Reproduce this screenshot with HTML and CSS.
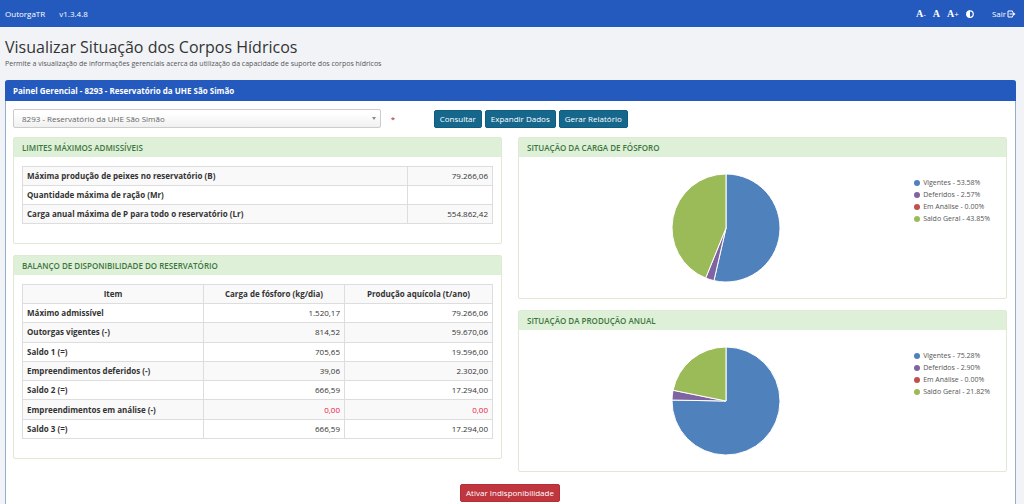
FILE: index.html
```
<!DOCTYPE html>
<html lang="pt-BR">
<head>
<meta charset="utf-8">
<meta name="viewport" content="width=device-width, initial-scale=1">
<title>OutorgaTR</title>
<link rel="stylesheet" href="styles.css">
</head>
<body>
<header class="topbar">
  <a class="brand" href="#">OutorgaTR</a>
  <span class="version">v1.3.4.8</span>
  <nav class="tools">
    <button class="tool" type="button"><span class="letter">A</span>-</button>
    <button class="tool" type="button"><span class="letter">A</span></button>
    <button class="tool" type="button"><span class="letter">A</span>+</button>
    <button class="tool" type="button" aria-label="Contraste">
      <svg class="icon-contrast" viewBox="0 0 16 16"><circle cx="8" cy="8" r="6.5" fill="none" stroke="currentColor" stroke-width="2.500"/><path d="M8 1a7 7 0 0 0 0 14z" fill="currentColor"/></svg>
    </button>
    <a class="logout" href="#">Sair
      <svg class="icon-logout" viewBox="0 0 18 16" fill="none" stroke="currentColor" stroke-width="2"><path d="M11 5V2H2v12h9V11"/><path d="M5 8h9"/><path d="M12 4l5 4-5 4z" fill="currentColor" stroke="none"/></svg>
    </a>
  </nav>
</header>
<main class="page">
  <h1 class="title">Visualizar Situação dos Corpos Hídricos</h1>
  <p class="subtitle">Permite a visualização de informações gerenciais acerca da utilização da capacidade de suporte dos corpos hídricos</p>
  <section class="panel">
    <h2 class="panel-head">Painel Gerencial - 8293 - Reservatório da UHE São Simão</h2>
    <div class="panel-body">
      <form class="filters">
        <div class="picker">
          <select class="select" aria-label="Reservatório"><option>8293 - Reservatório da UHE São Simão</option></select>
        </div>
        <span class="required">*</span>
        <div class="actions">
          <button class="btn" type="button">Consultar</button>
          <button class="btn" type="button">Expandir Dados</button>
          <button class="btn" type="button">Gerar Relatório</button>
        </div>
      </form>
      <div class="columns">
        <div class="column">
          <section class="card">
            <h3 class="card-head">LIMITES MÁXIMOS ADMISSÍVEIS</h3>
            <div class="card-body">
              <table class="table limits">
                <tr><th scope="row">Máxima produção de peixes no reservatório (B)</th><td>79.266,06</td></tr>
                <tr><th scope="row">Quantidade máxima de ração (Mr)</th><td></td></tr>
                <tr><th scope="row">Carga anual máxima de P para todo o reservatório (Lr)</th><td>554.862,42</td></tr>
              </table>
            </div>
          </section>
          <section class="card">
            <h3 class="card-head">BALANÇO DE DISPONIBILIDADE DO RESERVATÓRIO</h3>
            <div class="card-body">
              <table class="table balance">
                <thead><tr><th>Item</th><th>Carga de fósforo (kg/dia)</th><th>Produção aquícola (t/ano)</th></tr></thead>
                <tbody>
                <tr><th scope="row">Máximo admissível</th><td>1.520,17</td><td>79.266,06</td></tr>
                <tr><th scope="row">Outorgas vigentes (-)</th><td>814,52</td><td>59.670,06</td></tr>
                <tr><th scope="row">Saldo 1 (=)</th><td>705,65</td><td>19.596,00</td></tr>
                <tr><th scope="row">Empreendimentos deferidos (-)</th><td>39,06</td><td>2.302,00</td></tr>
                <tr><th scope="row">Saldo 2 (=)</th><td>666,59</td><td>17.294,00</td></tr>
                <tr class="alert"><th scope="row">Empreendimentos em análise (-)</th><td>0,00</td><td>0,00</td></tr>
                <tr><th scope="row">Saldo 3 (=)</th><td>666,59</td><td>17.294,00</td></tr>
                </tbody>
              </table>
            </div>
          </section>
        </div>
        <div class="column">
          <section class="card">
            <h3 class="card-head">SITUAÇÃO DA CARGA DE FÓSFORO</h3>
            <div class="chart">
              <svg class="pie" viewBox="0 0 110 110">
                <path class="blue" d="M55 55V1A54 54 0 1 1 42.950 107.640z"/>
                <path class="purple" d="M55 55L42.950 107.640A54 54 0 0 1 34.650 105.020z"/>
                <path class="green" d="M55 55L34.650 105.020A54 54 0 0 1 55 1z"/>
              </svg>
              <ul class="legend">
                <li><i class="dot dot-blue"></i>Vigentes - 53.58%</li>
                <li><i class="dot dot-purple"></i>Deferidos - 2.57%</li>
                <li><i class="dot dot-red"></i>Em Análise - 0.00%</li>
                <li><i class="dot dot-green"></i>Saldo Geral - 43.85%</li>
              </ul>
            </div>
          </section>
          <section class="card">
            <h3 class="card-head">SITUAÇÃO DA PRODUÇÃO ANUAL</h3>
            <div class="chart">
              <svg class="pie" viewBox="0 0 110 110">
                <path class="blue" d="M55 55V1A54 54 0 1 1 1.010 54.050z"/>
                <path class="purple" d="M55 55L1.010 54.050A54 54 0 0 1 2.070 44.280z"/>
                <path class="green" d="M55 55L2.070 44.280A54 54 0 0 1 55 1z"/>
              </svg>
              <ul class="legend">
                <li><i class="dot dot-blue"></i>Vigentes - 75.28%</li>
                <li><i class="dot dot-purple"></i>Deferidos - 2.90%</li>
                <li><i class="dot dot-red"></i>Em Análise - 0.00%</li>
                <li><i class="dot dot-green"></i>Saldo Geral - 21.82%</li>
              </ul>
            </div>
          </section>
        </div>
      </div>
      <div class="footer-actions"><button class="btn btn-danger" type="button">Ativar Indisponibilidade</button></div>
    </div>
  </section>
</main>
</body>
</html>
```
FILE: styles.css
```
* { box-sizing: border-box; }
body {
  margin: 0;
  min-height: 100vh;
  display: flex;
  flex-direction: column;
  background: #f1f3f7;
  color: #333;
  font: 8px/12px "Open Sans", "Noto Sans", sans-serif;
}
button, select { font: inherit; }
h1, h2, h3, p, ul { margin: 0; padding: 0; }

.topbar {
  display: flex;
  align-items: center;
  height: 27px;
  padding: 0 8px 0 5px;
  background: #2459bd;
  color: #fff;
}
.topbar a { color: #fff; text-decoration: none; }
.version { margin-left: 14px; }
.tools { display: flex; align-items: center; gap: 7px; margin-left: auto; }
.tool {
  display: flex;
  align-items: center;
  padding: 0;
  border: 0;
  background: none;
  color: #fff;
}
.letter { font: bold 10px/12px "Liberation Serif", serif; }
.icon-contrast { width: 8px; height: 8px; }
.logout { display: flex; align-items: center; gap: 1px; margin-left: 11px; }
.icon-logout { width: 9px; height: 8px; }

.page {
  flex: 1;
  display: flex;
  flex-direction: column;
  padding: 10px 8px 0 5px;
}
.title { font-size: 16px; line-height: 21px; font-weight: 400; }
.subtitle { font-size: 7px; color: #555; }
.panel {
  flex: 1;
  margin-top: 10px;
  border: 1px solid #8fb0cc;
  border-width: 0 1px;
  border-radius: 3px 3px 0 0;
  background: #fff;
}
.panel-head {
  margin: 0 -1px;
  padding: 0 8px;
  border-radius: 3px 3px 0 0;
  background: #2459bd;
  color: #fff;
  font-size: 8px;
  line-height: 21px;
}
.panel-body { padding: 8px 8px 0 7px; }

.filters { display: flex; align-items: center; }
.picker { position: relative; width: 37%; height: 19px; }
.picker::after {
  content: "";
  position: absolute;
  top: 8px;
  right: 5px;
  border: 2px solid transparent;
  border-top: 3px solid #888;
  border-bottom: 0;
}
.select {
  width: 100%;
  height: 100%;
  padding: 0 8px;
  appearance: none;
  border: 1px solid #ccc;
  border-radius: 2px;
  background: linear-gradient(#fff 20%, #f0f0f0 100%);
  color: #666;
}
.required { width: 53px; padding-left: 10px; color: #a02030; }
.actions { display: flex; gap: 3px; }
.btn {
  height: 18px;
  padding: 0 5px;
  border: 1px solid #125c80;
  border-radius: 2px;
  background: #16678c;
  color: #fff;
}
.btn-danger { border-color: #b52e37; background: #c0363f; }

.columns { display: grid; grid-template-columns: 1fr 1fr; gap: 16px; margin-top: 9px; }
.column { display: flex; flex-direction: column; gap: 11px; }
.card { border: 1px solid #dfead5; border-radius: 2px; background: #fff; }
.card-head {
  padding: 0 8px;
  background: #dff0d8;
  color: #3c763d;
  font-size: 8px;
  line-height: 19px;
  font-weight: 600;
}
.card-body { padding: 9px 8px 19px; }
.table { width: 100%; border-collapse: collapse; }
.table th, .table td { padding: 0 4px; border: 1px solid #ddd; }
.table td { text-align: right; }
.table tbody th { text-align: left; }
.limits { height: 58px; }
.limits th { width: 82%; }
.limits tr:nth-child(odd) { background: #f9f9f9; }
.balance { height: 155px; table-layout: fixed; }
.balance thead tr { height: 19px; }
.balance th:first-child { width: 181px; }
.balance th:nth-child(2) { width: 30%; }
.balance thead, .balance tbody tr:nth-child(even) { background: #f9f9f9; }
.alert td { color: #f0143c; }

.chart {
  display: grid;
  grid-template-columns: 1fr 110px 1fr;
  padding: 16px 16px 15px;
}
.pie { grid-column: 2; width: 110px; height: 110px; stroke: #fff; stroke-width: 1; margin-left: -37px; }
.blue { fill: #4f81bc; }
.purple { fill: #8064a1; }
.green { fill: #9bbb58; }
.legend { justify-self: end; padding-top: 4px; list-style: none; font-size: 7px; color: #555; }
.legend li { display: flex; align-items: center; gap: 3px; }
.dot { width: 6px; height: 6px; border-radius: 50%; }
.dot-blue { background: #4f81bc; }
.dot-purple { background: #8064a1; }
.dot-red { background: #c0504e; }
.dot-green { background: #9bbb58; }

.footer-actions { display: flex; justify-content: center; padding-top: 12px; }
```
